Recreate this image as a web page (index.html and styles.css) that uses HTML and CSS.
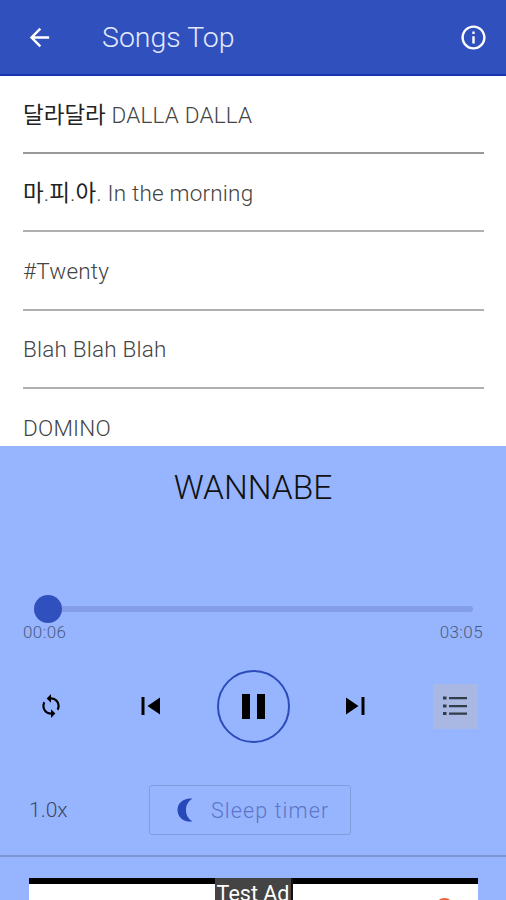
FILE: index.html
```html
<!DOCTYPE html>
<html lang="en">
<head>
<meta charset="utf-8">
<title>Songs Top</title>
<link rel="stylesheet" href="styles.css">
</head>
<body>
<div class="app">
  <header class="bar">
    <svg class="back" width="29" height="29" viewBox="0 0 24 24"><path d="M20 11H7.830l5.590-5.590L12 4l-8 8 8 8 1.410-1.410L7.830 13H20z"/></svg>
    <h1 class="heading">Songs Top</h1>
    <svg class="info" width="29" height="29" viewBox="0 0 24 24"><path d="M11 7h2v2h-2zm0 4h2v6h-2zm1-9C6.480 2 2 6.480 2 12s4.480 10 10 10 10-4.480 10-10S17.520 2 12 2zm0 18c-4.410 0-8-3.590-8-8s3.590-8 8-8 8 3.590 8 8-3.590 8-8 8z"/></svg>
  </header>
  <ul class="songs">
    <li class="song"><span class="name dalla"><span class="ko">달라달라</span> DALLA DALLA</span></li>
    <li class="song"><span class="name morning"><span class="ko">마</span>.<span class="ko">피</span>.<span class="ko">아</span>. In the morning</span></li>
    <li class="song"><span class="name">#Twenty</span></li>
    <li class="song"><span class="name">Blah Blah Blah</span></li>
    <li class="song"><span class="name domino">DOMINO</span></li>
  </ul>
  <section class="player">
    <h2 class="track">WANNABE</h2>
    <div class="seek"><span class="knob"></span><span class="line"></span></div>
    <div class="times"><span>00:06</span><span>03:05</span></div>
    <div class="controls">
      <svg class="loop" width="26" height="26" viewBox="0 0 24 24"><path d="M12 4V1L8 5l4 4V6c3.310 0 6 2.690 6 6 0 1.010-.25 1.970-.7 2.800l1.460 1.460C19.540 15.030 20 13.570 20 12c0-4.420-3.580-8-8-8zm0 14c-3.310 0-6-2.690-6-6 0-1.010.25-1.970.7-2.800L5.240 7.740C4.460 8.970 4 10.430 4 12c0 4.420 3.580 8 8 8v3l4-4-4-4v3z"/></svg>
      <svg width="20" height="20" viewBox="0 0 20 20"><path d="M.5 1h3v18h-3zM19 1.500v17L6.500 10z"/></svg>
      <div class="pause"><i></i><i></i></div>
      <svg width="20" height="20" viewBox="0 0 20 20"><path d="M16.500 1h3v18h-3zM1 1.500v17L13.500 10z"/></svg>
      <div class="queue"><svg width="26" height="22" viewBox="0 0 26 22"><path d="M1 1.500h3.500v3H1zM7 1.900h18v2.300H7zM1 9.500h3.500v3H1zM7 9.900h18v2.300H7zM1 17h3.500v3H1zM7 17.400h18v2.300H7z"/></svg></div>
    </div>
    <div class="options">
      <span class="speed">1.0x</span>
      <div class="sleep">
        <svg width="16" height="24" viewBox="0 0 16 24"><path d="M15.500.5C6.500-.5.500 5 .5 12s6 12.500 15 11.500C11 20.500 9 17 9 12S11 3.500 15.500.5z"/></svg>
        <span>Sleep timer</span>
      </div>
    </div>
  </section>
  <footer class="ad">
    <div class="banner">
      <span class="label">Test Ad</span>
      <span class="logo"></span>
    </div>
  </footer>
</div>
</body>
</html>
```

FILE: styles.css
```css
* { box-sizing: border-box; }
body { margin: 0; font-family: Roboto, "Noto Sans CJK KR", sans-serif; font-weight: 300; }
.app { width: 506px; height: 900px; overflow: hidden; display: flex; flex-direction: column; background: #fff; }
.bar { height: 76px; flex: none; display: flex; align-items: center; padding: 2px 18px 2px 25px; background: #3050bd; border-bottom: 2px solid #1434b4; }
.bar svg { fill: #fff; flex: none; }
.heading { margin: 2px 0 0 48px; flex: 1; font-size: 28.500px; font-weight: 300; line-height: 34px; letter-spacing: 0; color: #e3eaff; white-space: nowrap; }
.songs { list-style: none; margin: 0; padding: 0 22px 0 23px; height: 370px; flex: none; overflow: hidden; }
.song { height: 78.400px; border-bottom: 2px solid #b0b0b0; display: flex; align-items: center; color: #444; }
.song:first-child { height: 78px; border-bottom-color: #999; }
.name { font-size: 22.500px; line-height: 28px; letter-spacing: .2px; white-space: pre; }
.dalla, .morning, .domino { padding-top: 2px; }
.ko { font-weight: 400; font-size: 22.500px; letter-spacing: 0; color: #222; }
.player { height: 411px; flex: none; background: #97b5ff; border-bottom: 2px solid #7e96d6; padding: 21px 23px 0; }
.track { margin: 0; text-align: center; font-size: 33.500px; line-height: 42px; font-weight: 300; color: #111; }
.seek { margin: 86px 10px 0 11px; height: 28px; display: flex; align-items: center; }
.knob { width: 28px; height: 28px; border-radius: 50%; background: #3050bd; flex: none; }
.line { flex: 1; height: 6px; border-radius: 0 3px 3px 0; background: #839de6; }
.times { display: flex; justify-content: space-between; font-size: 17px; line-height: 18px; letter-spacing: .4px; color: #4a5a80; }
.controls { height: 74px; margin-top: 28px; display: grid; grid-template-columns: 56px 146px 56px 146px 58px; align-items: center; justify-items: center; justify-content: center; }
.controls > :first-child { margin-left: 2px; }
.controls > .pause { margin-left: 2px; }
.controls > :nth-child(4) { margin-left: 4px; }
.pause { width: 73px; height: 73px; border: 2.500px solid #2c4cba; border-radius: 50%; display: flex; align-items: center; justify-content: center; gap: 7px; }
.pause i { width: 8px; height: 25px; background: #000; }
.queue { width: 45px; height: 45px; background: #a9b8e2; display: flex; align-items: center; justify-content: center; }
.queue svg { fill: #333a48; }
.options { display: flex; align-items: center; margin-top: 42px; padding-left: 6px; }
.speed { width: 120px; font-size: 21px; letter-spacing: 0; color: #3a4763; }
.sleep { width: 202px; height: 50px; border: 1.500px solid #829dde; border-radius: 3px; display: flex; align-items: center; padding-left: 27px; gap: 18px; font-size: 21.500px; letter-spacing: 1.100px; color: #5b76c8; white-space: nowrap; }
.sleep svg { fill: #2948b8; flex: none; }
.ad { flex: 1; background: #97b5ff; padding: 21px 28px 0 29px; }
.banner { position: relative; height: 60px; background: #fff; border-top: 6px solid #000; }
.label { position: absolute; left: 186px; top: -6px; width: 78px; height: 40px; background: #444; border-right: 2px solid #111; color: #fff; font-size: 21.500px; font-weight: 400; line-height: 31px; text-align: center; white-space: nowrap; }
.logo { position: absolute; right: 24px; top: 14px; width: 19px; height: 19px; border-radius: 50%; background: #e9642d; }
```
